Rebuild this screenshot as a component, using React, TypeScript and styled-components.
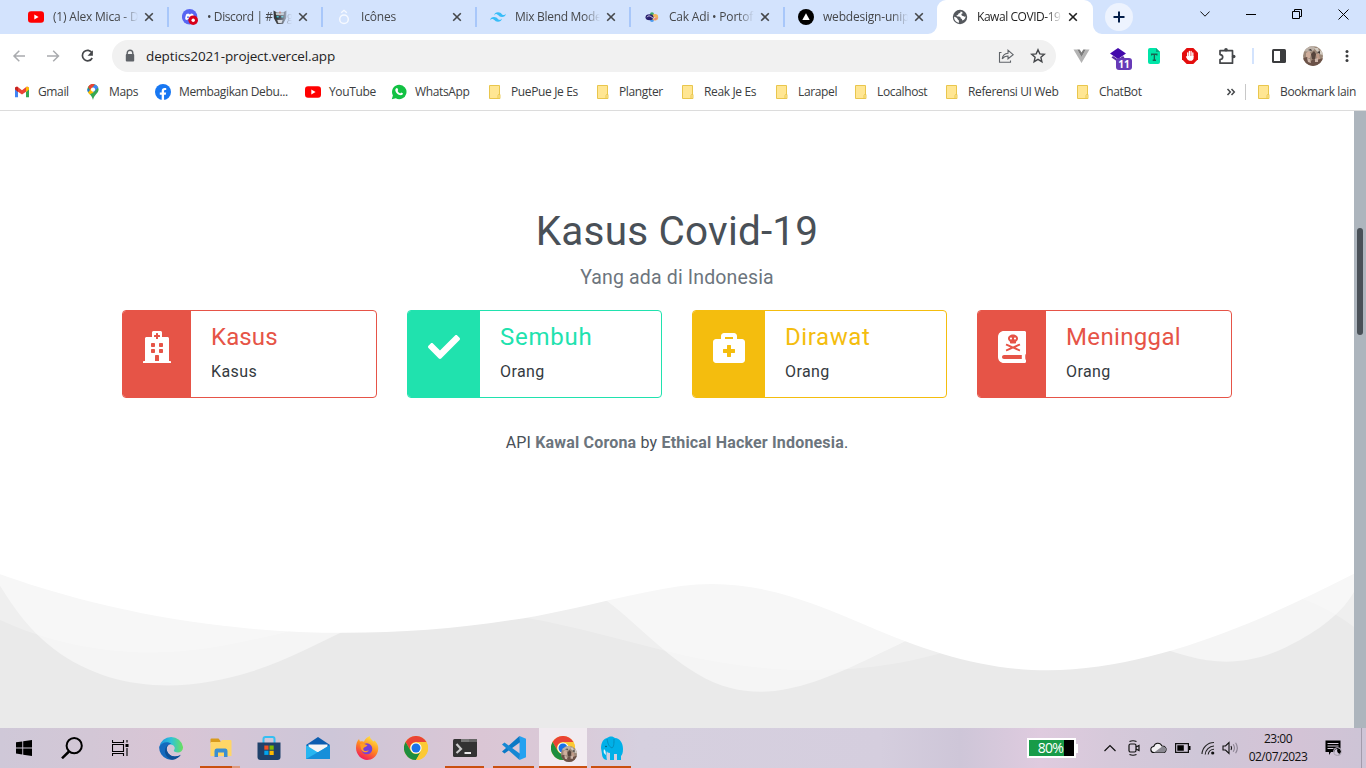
import React from 'react';
import styled, { createGlobalStyle } from 'styled-components';
import { FaHospital, FaCheck, FaBriefcaseMedical, FaBookDead, FaWhatsapp, FaFacebookF } from 'react-icons/fa';

const UI_FONT = '"Open Sans", "Noto Sans", sans-serif';
const PAGE_FONT = 'Roboto, "Liberation Sans", sans-serif';

const GlobalStyle = createGlobalStyle`
  * { box-sizing: border-box; }
  body { margin: 0; overflow: hidden; background: #fff; }
  svg { display: block; flex: none; }
`;

const Screen = styled.div`
  width: 1366px;
  height: 768px;
  display: flex;
  flex-direction: column;
  overflow: hidden;
  font-family: ${UI_FONT};
`;

/* ---------- tab strip ---------- */

const TabStrip = styled.div`
  height: 34px;
  flex: none;
  display: flex;
  background: #d3e3fd;
  padding-left: 15px;
`;

const Tab = styled.div<{ $active?: boolean; $noLine?: boolean }>`
  position: relative;
  width: 154px;
  height: 34px;
  display: flex;
  align-items: center;
  padding-left: 13px;
  border-radius: 9px 9px 0 0;
  background: ${p => (p.$active ? '#fff' : 'transparent')};
  ${p => p.$active && 'margin-left: -2px; padding-left: 15px; width: 156px;'}
  &::after {
    content: '';
    position: absolute;
    right: 0;
    top: 7px;
    width: 2px;
    height: 20px;
    background: ${p => (p.$active || p.$noLine ? 'transparent' : '#a8c7fa')};
  }
`;

const TabFoot = styled.svg<{ $side: 'left' | 'right' }>`
  position: absolute;
  bottom: 0;
  ${p => p.$side}: -9px;
`;

const TabTitle = styled.div<{ $active?: boolean; $ls?: number }>`
  width: 86px;
  margin-left: 9px;
  display: flex;
  align-items: center;
  white-space: nowrap;
  overflow: hidden;
  font-size: 12px;
  line-height: 18px;
  letter-spacing: ${p => p.$ls ?? -0.2}px;
  color: ${p => (p.$active ? '#1f1f1f' : '#45474a')};
  mask-image: linear-gradient(90deg, #000 80%, transparent 99%);
`;

const TabClose = styled.div`
  margin-left: 4px;
`;

const NewTab = styled.div`
  width: 28px;
  height: 28px;
  margin: 3px 0 0 12px;
  border-radius: 50%;
  background: #edf3fe;
  display: flex;
  align-items: center;
  justify-content: center;
`;

const WindowButtons = styled.div`
  margin-left: auto;
  display: flex;
  height: 28px;
  & > * {
    width: 46px;
    display: flex;
    align-items: center;
    justify-content: center;
  }
`;

/* ---------- toolbar ---------- */

const Toolbar = styled.div`
  height: 42px;
  flex: none;
  display: flex;
  align-items: center;
  padding: 2px 0 0 12px;
`;

const NavButton = styled.div`
  width: 34px;
  height: 16px;
`;

const AddressBar = styled.div`
  width: 944px;
  height: 32px;
  margin-left: -2px;
  border-radius: 16px;
  background: #f1f1f1;
  display: flex;
  align-items: center;
  padding: 0 10px 0 12px;
`;

const Url = styled.div`
  flex: 1;
  margin-left: 10px;
  font-size: 13.5px;
  line-height: 20px;
  letter-spacing: -0.13px;
  color: #1f1f1f;
`;

const AddressIcon = styled.div`
  margin-left: 16px;
`;

const ExtensionRow = styled.div`
  display: flex;
  align-items: center;
  flex: 1;
  padding-left: 17px;
`;

const ExtensionSlot = styled.div<{ $w: number }>`
  position: relative;
  flex: none;
  width: ${p => p.$w}px;
  height: 20px;
  display: flex;
  align-items: center;
`;

const Badge = styled.div`
  position: absolute;
  left: 6px;
  top: 12px;
  width: 16px;
  height: 12px;
  border-radius: 3px;
  background: #673ab7;
  color: #fff;
  font: 700 10px/12px ${UI_FONT};
  text-align: center;
`;

const ToolbarLine = styled.div`
  width: 2px;
  height: 16px;
  background: #d3e3fd;
  margin-right: 18px;
`;

/* ---------- bookmarks ---------- */

const BookmarkBar = styled.div`
  height: 35px;
  flex: none;
  display: flex;
  align-items: center;
  padding: 0 0 2px 14px;
  border-bottom: 1px solid #dcdcdc;
`;

const Bookmark = styled.div<{ $w: number }>`
  flex: none;
  width: ${p => p.$w}px;
  display: flex;
  align-items: center;
  gap: 8px;
`;

const BookmarkText = styled.span<{ $ls?: number }>`
  font-size: 12px;
  line-height: 16px;
  white-space: nowrap;
  letter-spacing: ${p => p.$ls ?? -0.36}px;
  color: #3b3d40;
`;

const MoreBookmarks = styled.div`
  width: 19px;
  margin-left: 5px;
`;

const BookmarkLine = styled.div`
  width: 1px;
  height: 16px;
  background: #c8c8c8;
  margin-right: 10px;
`;

/* ---------- web page ---------- */

const Viewport = styled.div`
  height: 617px;
  flex: none;
  display: flex;
`;

const Page = styled.main`
  width: 1354px;
  height: 617px;
  background: #fff;
  overflow: hidden;
  font-family: ${PAGE_FONT};
`;

const Scrollbar = styled.div`
  width: 12px;
  background: #adb5bd;
  padding: 117px 3px 0;
`;

const ScrollThumb = styled.div`
  width: 6px;
  height: 107px;
  border-radius: 3px;
  background: #495057;
`;

const CasesSection = styled.section`
  height: 457px;
  padding-top: 96px;
  display: flex;
  flex-direction: column;
  align-items: center;
`;

const Title = styled.h1`
  margin: 0;
  font-size: 40.5px;
  font-weight: 400;
  line-height: 48px;
  letter-spacing: 0.2px;
  color: #495057;
`;

const Subtitle = styled.p`
  margin: 9px 0 0;
  font-size: 19.5px;
  line-height: 28px;
  letter-spacing: 0.15px;
  color: #6c757d;
`;

const Cards = styled.div`
  width: 1110px;
  margin-top: 18px;
  display: grid;
  grid-template-columns: repeat(4, 255px);
  gap: 30px;
`;

const Card = styled.article<{ $color: string }>`
  height: 88px;
  display: flex;
  border: 1px solid ${p => p.$color};
  border-radius: 4px;
  overflow: hidden;
`;

const CardIcon = styled.div<{ $color: string }>`
  flex: none;
  padding: 20px 20px 0;
  background: ${p => p.$color};
  color: #fff;
`;

const CardBody = styled.div`
  padding: 12px 0 0 20px;
`;

const CardTitle = styled.h2<{ $color: string; $ls: number }>`
  margin: 0;
  font-size: 24px;
  font-weight: 400;
  line-height: 29px;
  letter-spacing: ${p => p.$ls}px;
  color: ${p => p.$color};
`;

const CardUnit = styled.p`
  margin: 8px 0 0;
  font-size: 16px;
  line-height: 24px;
  letter-spacing: 0.4px;
  color: #343a40;
`;

const Credit = styled.p`
  margin: 33px 0 0;
  font-size: 16px;
  line-height: 24px;
  letter-spacing: 0.18px;
  color: #495057;
  strong { color: #6c757d; font-weight: 700; }
`;

const WaveSection = styled.section`
  height: 160px;
  background: #eaeaea;
`;

/* ---------- taskbar ---------- */

const Taskbar = styled.footer`
  height: 40px;
  flex: none;
  display: flex;
  background: linear-gradient(90deg, #cfc8d8 0, #d3c7d6 90px, #d9c5d5 170px, #d4c6d7 230px, #cdc6d8 330px, #dac6d5 480px, #dac9d7 560px, #d6d0df 640px, #d5cede 880px, #cec6d8 960px, #dfcbdf 1040px, #d6c9da 1110px, #cfc7d8 1200px, #d4c3d6 1290px, #cdc4d6 1366px);
`;

const TaskButton = styled.div<{ $w: number; $on?: boolean }>`
  width: ${p => p.$w}px;
  height: 40px;
  display: flex;
  align-items: center;
  justify-content: center;
  background: ${p => (p.$on ? '#f1ebf0' : 'transparent')};
`;

const RunningApp = styled(TaskButton)<{ $wide?: boolean; $stack?: boolean }>`
  position: relative;
  &::after {
    content: '';
    position: absolute;
    bottom: 0;
    left: ${p => (p.$wide ? 0 : 4)}px;
    right: ${p => (p.$wide ? 0 : 5)}px;
    height: 2px;
    background: ${p => (p.$stack ? 'linear-gradient(90deg, #ca5010 80%, #df9a7e 80%)' : '#ca5010')};
  }
`;

const Tray = styled.div`
  margin-left: auto;
  display: flex;
  align-items: center;
`;

const Battery = styled.div`
  width: 49px;
  height: 20px;
  border: 2px solid #fff;
  display: flex;
  align-items: center;
  justify-content: center;
  background: linear-gradient(90deg, #179b48 35px, #000 35px);
  padding-right: 2px;
  color: #fff;
  font: 400 14px/16px ${UI_FONT};
  letter-spacing: -0.7px;
`;

const BatteryTip = styled.div`
  width: 2px;
  height: 9px;
  background: #fff;
  margin-right: 25px;
`;

const TrayIcon = styled.div<{ $w: number }>`
  width: ${p => p.$w}px;
  display: flex;
  justify-content: center;
`;

const Clock = styled.div`
  width: 74px;
  margin-left: -5px;
  text-align: center;
  color: #111;
  font-size: 12px;
  line-height: 18px;
  letter-spacing: -0.5px;
  white-space: nowrap;
`;

const Notice = styled.div`
  width: 36px;
  display: flex;
  justify-content: center;
`;

const ShowDesktop = styled.div`
  width: 5px;
  height: 40px;
  margin-left: 10px;
  border-left: 1px solid #a39bab;
`;

/* ---------- drawings ---------- */

const YouTube = () => (
  <svg width="16" height="16" viewBox="0 0 16 16">
    <rect y="2.3" width="16" height="11.4" rx="3" fill="#f00" />
    <path d="M6.3 5.6v4.8L10.6 8z" fill="#fff" />
  </svg>
);

const Discord = () => (
  <svg width="16" height="16" viewBox="0 0 16 16">
    <circle cx="7.6" cy="7.8" r="7.7" fill="#5865f2" />
    <path d="M3.2 10.3c0-2.300.5-4 1.300-5.200l2-.6.5.8h1.500l.5-.8 2 .6c.8 1.200 1.200 2.900 1.200 4.900l-2 1.200-.7-1.100H6l-.8 1.100z" fill="#fff" />
    <circle cx="6" cy="8.200" r=".9" fill="#5865f2" />
    <circle cx="11.200" cy="11.200" r="4.800" fill="#d8001b" />
    <circle cx="11.200" cy="11.200" r="1.700" fill="#fff" />
  </svg>
);

const BotFace = () => (
  <svg width="14" height="15" viewBox="0 0 14 15">
    <path d="M.5.500l3.500 2h6l3.500-2-.3 7.500-3.200 6H4L.8 8z" fill="#37383a" />
    <path d="M2.600 2.600L11 2.600l-.4 3H3.200z" fill="#bfc1c2" />
    <path d="M2.600 5.500h8.800l-.8 3H3.400z" fill="#1b1b1c" />
    <path d="M3.500 6h2.200v1.400H3.500zM8.200 6h2.200v1.400H8.200z" fill="#3ec3cf" />
    <path d="M4.300 10h5.400L8.600 13H5.300z" fill="#d9d9d9" />
    <path d="M6.400 1.500h1.200v2H6.400z" fill="#d04a3a" />
  </svg>
);

const Icones = () => (
  <svg width="16" height="16" viewBox="0 0 16 16" fill="none" stroke="#f6f9ff">
    <circle cx="8" cy="10.300" r="4.300" strokeWidth="1.500" />
    <path d="M5.200 3.800L8 1.300l2.800 2.500" strokeWidth="1.300" />
  </svg>
);

const Tailwind = () => (
  <svg width="16" height="16" viewBox="0 0 24 24" fill="#38bdf8">
    <path d="M12 4.800c-3.200 0-5.200 1.600-6 4.800 1.200-1.600 2.600-2.200 4.200-1.800.913.228 1.565.89 2.288 1.624C13.666 10.618 15.027 12 18 12c3.200 0 5.200-1.600 6-4.800-1.200 1.600-2.600 2.200-4.200 1.800-.913-.228-1.565-.89-2.288-1.624C16.337 6.182 14.976 4.800 12 4.800zM6 12c-3.200 0-5.200 1.600-6 4.800 1.200-1.600 2.600-2.200 4.200-1.800.913.228 1.565.89 2.288 1.624C7.666 17.818 9.027 19.200 12 19.200c3.200 0 5.200-1.600 6-4.800-1.200 1.600-2.600 2.200-4.200 1.800-.913-.228-1.565-.89-2.288-1.624C10.337 13.382 8.976 12 6 12z" />
  </svg>
);

const Knot = () => (
  <svg width="16" height="16" viewBox="0 0 16 16">
    <circle cx="8" cy="5.300" r="2" fill="#3faa67" />
    <circle cx="8" cy="11" r="2" fill="#4c9bf0" />
    <circle cx="11" cy="8.200" r="3.200" fill="#f3b65c" />
    <path d="M14 8.500l-3 3-1-2z" fill="#e87f8f" />
    <ellipse cx="5.500" cy="8.200" rx="4" ry="3" fill="#29206f" />
    <path d="M3 8.200c1.500-2.200 3.500-1.200 5 .2s2.500 1 3-.5" fill="none" stroke="#e9dff5" strokeWidth=".9" />
  </svg>
);

const Vercel = () => (
  <svg width="16" height="16" viewBox="0 0 16 16">
    <circle cx="8" cy="8" r="8" fill="#000" />
    <path d="M8 4.300L11.700 11H4.300z" fill="#fff" />
  </svg>
);

const Globe = () => (
  <svg width="16" height="16" viewBox="0 0 16 16">
    <circle cx="8" cy="8" r="7.200" fill="#54585d" />
    <path d="M8.800 2.200c-.2 1.500-.8 2-2.200 2.200-.6 1.700-1.200 1.800-2.200 1.900.2 1 .9 1.200 2.400 1.200 1.500 0 1.900.8 1.900 2 1.200.1 1.600.8 1.500 2 2-.4 3.400-2.200 3.500-4.200-.7.600-1.800.4-2.400-.4-.8.2-1.900-.1-1.900-1.300 0-.9.7-1.300 1.900-1.300z" fill="#fff" />
    <path d="M2.100 7.800c1.300.2 3 .8 3.300 2 .2 1 1 1.200 1.400 1.500l.2 2.500C4 13.400 2 11 2.100 7.800z" fill="#fff" />
  </svg>
);

const Cross = ({ dark }: { dark?: boolean }) => (
  <svg width="12" height="12" viewBox="0 0 12 12">
    <path d="M2.200 2.200l7.600 7.600M9.800 2.200L2.200 9.800" stroke={dark ? '#1f1f1f' : '#45474a'} strokeWidth="1.600" />
  </svg>
);

const Gmail = () => (
  <svg width="16" height="16" viewBox="0 0 16 16">
    <path d="M1 4.500v8.700h3V7.500L1 5z" fill="#4285f4" />
    <path d="M12 7.500v5.700h3V4.500z" fill="#34a853" />
    <path d="M1 4.500c0-1.600 1.700-2.300 2.900-1.400L8 6.200l4.100-3.100c1.200-.9 2.900-.2 2.900 1.400L12 7.700 8 10.500 4 7.700z" fill="#ea4335" />
    <path d="M12 3.200c1.400-1 3 0 3 1.400v1L12 7.900z" fill="#fbbc04" />
    <path d="M4 3.200C2.600 2.200 1 3.200 1 4.600v1l3 2.300z" fill="#c5221f" />
  </svg>
);

const MapsPin = () => (
  <svg width="16" height="16" viewBox="0 0 16 16">
    <path d="M8 0a5.600 5.600 0 0 0-5.600 5.600C2.400 9.500 6.800 10.500 8 16c1.200-5.500 5.600-6.500 5.600-10.400A5.600 5.600 0 0 0 8 0z" fill="#34a853" />
    <path d="M3.200 2.700A5.600 5.600 0 0 1 10 .4L5 6.300z" fill="#ea4335" />
    <path d="M10 .4a5.600 5.600 0 0 1 3.200 3L8.500 8.500 6 5.500z" fill="#4285f4" />
    <path d="M2.600 4.500l2.600 1.800-2.200 2C2.300 6.800 2.300 5.600 2.600 4.500z" fill="#1a73e8" />
    <path d="M8.500 8.500L4.500 10.600 3 8.400l4-5z" fill="#fbbc04" />
    <circle cx="8" cy="5.600" r="2.100" fill="#fff" />
  </svg>
);

const WhatsApp = () => (
  <svg width="16" height="16" viewBox="0 0 16 16">
    <path d="M8.200.800a7.200 7.200 0 1 1-3.400 13.500L.8 15.300l1.100-3.800A7.200 7.200 0 0 1 8.200.800z" fill="#12c143" />
    <path d="M5.400 4.300c.7-.5 1.100-.1 1.300.5l.5 1.200-.6 1c.6 1.100 1.400 1.800 2.600 2.400l.9-1 1.800.9c.2 1.300-1 2-2 2-2.800-.2-5.600-3-5.600-5.300 0-.8.5-1.400 1.100-1.700z" fill="#fff" />
  </svg>
);

const RoundLogo = styled.div<{ $bg: string; $pad?: number }>`
  width: 16px;
  height: 16px;
  border-radius: 50%;
  background: ${p => p.$bg};
  color: #fff;
  display: flex;
  align-items: ${p => (p.$pad ? 'flex-end' : 'center')};
  justify-content: center;
  flex: none;
`;

const Folder = () => (
  <svg width="16" height="16" viewBox="0 0 16 16">
    <path d="M2.500 1.500h10V14.500h-10z" fill="#ffe693" stroke="#e9c64d" />
    <path d="M11.500 10.500h1.500v4h-2v-3z" fill="#ffe693" stroke="#e9c64d" strokeWidth=".9" />
  </svg>
);

const Avatar = ({ size }: { size: number }) => (
  <svg width={size} height={size} viewBox="0 0 20 20">
    <defs><clipPath id={`face${size}`}><circle cx="10" cy="10" r="10" /></clipPath></defs>
    <g clipPath={`url(#face${size})`}>
      <path d="M0 0h20v20H0z" fill="#9c8878" />
      <path d="M0 0h12l-1 4-4 2-7-1z" fill="#bdb2a8" />
      <path d="M11 2h4l1 3 4-1v5l-4-1z" fill="#d2cac0" />
      <path d="M3 7l3-2 2 3-1 4H3z" fill="#cfae9c" />
      <path d="M8 8l3-3 2 3-1 5H9z" fill="#55443c" />
      <path d="M13 8h3l1 5-3 1z" fill="#c09b88" />
      <path d="M0 12l4-1 3 5 3-3 4 1 6-2v8H0z" fill="#6b5248" />
      <path d="M4 12l3 1 1 4-3-1zM12 13l3-1v4h-3z" fill="#cdb5a9" />
      <path d="M14 6l3-1v3zM5 4l3-1 1 2z" fill="#3b3330" />
    </g>
  </svg>
);

const Chrome = ({ size = 24 }: { size?: number }) => (
  <svg width={size} height={size} viewBox="0 0 24 24">
    <circle cx="12" cy="12" r="12" fill="#fcc934" />
    <path d="M1.600 6A12 12 0 0 1 22.400 6H12a6 6 0 0 0-5.200 9z" fill="#ea4335" />
    <path d="M1.600 6L6.800 15A6 6 0 0 0 17.200 15L12 24A12 12 0 0 1 1.600 6z" fill="#1e8e3e" />
    <path d="M22.400 6H12l5.200 9L12 24A12 12 0 0 0 22.400 6z" fill="#fcc934" />
    <circle cx="12" cy="12" r="5.600" fill="#fff" />
    <circle cx="12" cy="12" r="4.500" fill="#1a73e8" />
  </svg>
);

const ProfileChrome = styled.div`
  position: relative;
  width: 24px;
  height: 24px;
  & > svg:last-child {
    position: absolute;
    left: 10px;
    top: 10px;
  }
`;

const Waves = () => (
  <svg width="1354" height="135" viewBox="0 0 1200 120" preserveAspectRatio="none" fill="#fff">
    <path d="M0,0V46.29c47.79,22.2,103.59,32.17,158,28,70.36-5.37,136.33-33.31,206.8-37.5C438.64,32.43,512.34,53.67,583,72.05c69.27,18,138.3,24.88,209.4,13.08,36.15-6,69.85-17.84,104.45-29.34C989.49,25,1113-14.29,1200,52.47V0Z" opacity=".25" />
    <path d="M0,0V15.81C13,36.92,27.64,56.86,47.69,72.05,99.41,111.27,165,111,224.58,91.58c31.15-10.15,60.09-26.07,89.67-39.8,40.92-19,84.73-46,130.83-49.67,36.26-2.85,70.9,9.42,98.6,31.56,31.77,25.39,62.32,62,103.63,73,40.44,10.79,81.35-6.69,119.13-24.28s75.16-39,116.92-43.05c59.73-5.85,113.28,22.88,168.9,38.84,30.2,8.66,59,6.17,87.09-7.5,22.43-10.89,48-26.93,60.65-49.24V0Z" opacity=".5" />
    <path d="M0,0V5.63C149.93,59,314.09,71.32,475.83,42.57c43-7.64,84.23-20.12,127.61-26.46,59-8.63,112.48,12.24,165.56,35.4C827.93,77.22,886,95.24,951.2,90c86.53-7,172.46-45.71,248.8-84.81V0Z" />
  </svg>
);

/* ---------- data ---------- */

const tabs = [
  { icon: <YouTube />, title: '(1) Alex Mica - D' },
  { icon: <Discord />, title: <>• Discord | #<BotFace />g</>, ls: -0.4 },
  { icon: <Icones />, title: 'Icônes' },
  { icon: <Tailwind />, title: 'Mix Blend Mode', ls: -0.3 },
  { icon: <Knot />, title: 'Cak Adi • Portof' },
  { icon: <Vercel />, title: 'webdesign-unip' },
  { icon: <Globe />, title: 'Kawal COVID-19', active: true, ls: -0.45 },
];

const bookmarks = [
  { icon: <Gmail />, label: 'Gmail', w: 71 },
  { icon: <MapsPin />, label: 'Maps', w: 70 },
  { icon: <RoundLogo $bg="#1877f2" $pad={1}><FaFacebookF size={12} /></RoundLogo>, label: 'Membagikan Debu...', w: 150 },
  { icon: <YouTube />, label: 'YouTube', w: 86 },
  { icon: <WhatsApp />, label: 'WhatsApp', w: 96 },
  { icon: <Folder />, label: 'PuePue Je Es', w: 108 },
  { icon: <Folder />, label: 'Plangter', w: 85 },
  { icon: <Folder />, label: 'Reak Je Es', w: 94 },
  { icon: <Folder />, label: 'Larapel', w: 79 },
  { icon: <Folder />, label: 'Localhost', w: 91 },
  { icon: <Folder />, label: 'Referensi UI Web', w: 131 },
  { icon: <Folder />, label: 'ChatBot', w: 146 },
];

const cards = [
  { color: '#e65447', icon: <FaHospital size={32} style={{ width: 28 }} />, title: 'Kasus', unit: 'Kasus', ls: 0.1 },
  { color: '#20e2ae', icon: <FaCheck size={32} />, title: 'Sembuh', unit: 'Orang', ls: 0.75 },
  { color: '#f4bd0e', icon: <FaBriefcaseMedical size={32} />, title: 'Dirawat', unit: 'Orang', ls: 0.6 },
  { color: '#e65447', icon: <FaBookDead size={32} style={{ width: 28 }} />, title: 'Meninggal', unit: 'Orang', ls: 0.35 },
];

export default function App() {
  return (
    <Screen>
      <GlobalStyle />
      <TabStrip>
        {tabs.map((t, i) => (
          <Tab key={i} $active={t.active} $noLine={i === 5}>
            {t.active && (
              <>
                <TabFoot $side="left" width="9" height="9"><path d="M9 0v9H0a9 9 0 0 0 9-9z" fill="#fff" /></TabFoot>
                <TabFoot $side="right" width="9" height="9"><path d="M0 0v9h9a9 9 0 0 1-9-9z" fill="#fff" /></TabFoot>
              </>
            )}
            {t.icon}
            <TabTitle $active={t.active} $ls={t.ls}>{t.title}</TabTitle>
            <TabClose><Cross dark={t.active} /></TabClose>
          </Tab>
        ))}
        <NewTab>
          <svg width="12" height="12"><path d="M6 .500v11M.5 6h11" stroke="#041e49" strokeWidth="2" /></svg>
        </NewTab>
        <WindowButtons>
          <div><svg width="10" height="6" fill="none" stroke="#111"><path d="M.4.500L5 5.200 9.600.500" /></svg></div>
          <div><svg width="10" height="1"><path d="M0 .500h10" stroke="#000" /></svg></div>
          <div>
            <svg width="10" height="10" fill="none" stroke="#000">
              <path d="M.5 2.500h7v7h-7zM2.500 2.500v-2h7v7h-2" />
            </svg>
          </div>
          <div><svg width="11" height="11"><path d="M.5.500l10 10M10.500.500l-10 10" stroke="#000" /></svg></div>
        </WindowButtons>
      </TabStrip>

      <Toolbar>
        <NavButton>
          <svg width="16" height="16" fill="none" stroke="#a9abae" strokeWidth="1.500"><path d="M13 8H2M7.300 2.700L2 8l5.300 5.300" /></svg>
        </NavButton>
        <NavButton>
          <svg width="16" height="16" fill="none" stroke="#a9abae" strokeWidth="1.500"><path d="M1 8h11.500M7.200 2.700L12.500 8l-5.300 5.300" /></svg>
        </NavButton>
        <NavButton>
          <svg width="16" height="16" fill="none" stroke="#45474a" strokeWidth="1.700">
            <path d="M12 4.800A5.200 5.200 0 1 0 12.200 10" />
            <path d="M12.900 2.300v5.400H7.500z" fill="#45474a" stroke="none" />
          </svg>
        </NavButton>
        <AddressBar>
          <svg width="12" height="14" viewBox="0 0 12 14">
            <path d="M3.200 6V4a2.800 2.800 0 0 1 5.600 0v2" fill="none" stroke="#5f6368" strokeWidth="1.400" />
            <rect x="1.800" y="5" width="8.400" height="7.500" rx="1" fill="#5f6368" />
          </svg>
          <Url>deptics2021-project.vercel.app</Url>
          <svg width="16" height="16" fill="none" stroke="#5f6368" strokeWidth="1.100">
            <path d="M3.500 4.500H1.500v9.800H12.500V12.500" />
            <path d="M4.200 10.800C4.700 7.300 6.600 5.500 10 5.200V2.300L15.200 6.700 10 10.800V8c-2.500 0-4.400.9-5.800 2.800z" />
          </svg>
          <AddressIcon>
            <svg width="16" height="16" fill="none" stroke="#45474a" strokeWidth="1.400">
              <path d="M8 1.800l1.800 4.100 4.500.4-3.400 3 1 4.400L8 11.400l-3.900 2.300 1-4.400-3.400-3 4.500-.4z" />
            </svg>
          </AddressIcon>
        </AddressBar>
        <ExtensionRow>
          <ExtensionSlot $w={37}>
            <svg width="17" height="16" viewBox="0 0 17 16">
              <path d="M.5 1.500h3.700L8.500 9l4.300-7.500h3.700L8.500 15z" fill="#b3b3b3" />
              <path d="M4.200 1.500h2.500l1.800 3 1.800-3h2.500L8.500 9z" fill="#7d7d7d" />
            </svg>
          </ExtensionSlot>
          <ExtensionSlot $w={37}>
            <svg width="17" height="18" viewBox="0 0 17 18">
              <path d="M0 6.500L8 1l8 5.500L8 12z" fill="#4309ac" />
              <path d="M1.500 10.500L3 9l5 3.500L13 9l1.500 1.500L8 15z" fill="#5a2ca0" />
            </svg>
            <Badge>11</Badge>
          </ExtensionSlot>
          <ExtensionSlot $w={35}>
            <svg width="14" height="16" viewBox="0 0 14 16">
              <path d="M3 0h6l4 4v10a2 2 0 0 1-2 2H3a2 2 0 0 1-2-2V2a2 2 0 0 1 2-2z" fill="#00e5a8" />
              <path d="M9 0l4 4H9z" fill="#0aa781" />
              <path d="M4 5.500h6.500v2H9.300V7H8v4.500h1V13H5.700v-1.500h1V7H5.200v.5H4z" fill="#176451" />
            </svg>
          </ExtensionSlot>
          <ExtensionSlot $w={36}>
            <svg width="16" height="16" viewBox="0 0 16 16">
              <path d="M4.700 0h6.600L16 4.700v6.600L11.300 16H4.700L0 11.300V4.700z" fill="#e40d0d" />
              <path d="M5.700 9V4.800M7.400 8V3.500M9.100 8V3.500M10.800 9V4.800" stroke="#fff" strokeWidth="1.300" strokeLinecap="round" />
              <path d="M5 8h6.500v2.200c0 1.500-1.200 2.600-3 2.600-1.600 0-2.700-.8-3.500-2.100l-1.200-2z" fill="#fff" />
            </svg>
          </ExtensionSlot>
          <ExtensionSlot $w={34}>
            <svg width="18" height="18" viewBox="0 0 18 18">
              <path d="M2 3.700h12.500v12.500H2v-3.700c3.600-.2 3.600-4.700 0-4.900z" fill="none" stroke="#45474a" strokeWidth="1.700" strokeLinejoin="round" />
              <circle cx="8" cy="2.700" r="1.800" fill="#45474a" />
              <circle cx="15.700" cy="9.500" r="1.800" fill="#45474a" />
            </svg>
          </ExtensionSlot>
          <ToolbarLine />
          <ExtensionSlot $w={31}>
            <svg width="14" height="14"><rect width="14" height="14" rx="1.500" fill="#3b3c3e" /><rect x="2" y="2" width="6" height="10" fill="#fff" /></svg>
          </ExtensionSlot>
          <ExtensionSlot $w={42}><Avatar size={20} /></ExtensionSlot>
          <svg width="4" height="14" fill="#3b3c3e"><circle cx="2" cy="2.500" r="1.500" /><circle cx="2" cy="7" r="1.500" /><circle cx="2" cy="11.500" r="1.500" /></svg>
        </ExtensionRow>
      </Toolbar>

      <BookmarkBar>
        {bookmarks.map(b => (
          <Bookmark key={b.label} $w={b.w}>{b.icon}<BookmarkText>{b.label}</BookmarkText></Bookmark>
        ))}
        <MoreBookmarks>
          <svg width="10" height="8" fill="none" stroke="#45474a" strokeWidth="1.500"><path d="M1.500 1L4.300 4 1.500 7M5.500 1l2.800 3-2.800 3" /></svg>
        </MoreBookmarks>
        <BookmarkLine />
        <Bookmark $w={110}><Folder /><BookmarkText>Bookmark lain</BookmarkText></Bookmark>
      </BookmarkBar>

      <Viewport>
        <Page>
          <CasesSection>
            <Title>Kasus Covid-19</Title>
            <Subtitle>Yang ada di Indonesia</Subtitle>
            <Cards>
              {cards.map(c => (
                <Card key={c.title} $color={c.color}>
                  <CardIcon $color={c.color}>{c.icon}</CardIcon>
                  <CardBody>
                    <CardTitle $color={c.color} $ls={c.ls}>{c.title}</CardTitle>
                    <CardUnit>{c.unit}</CardUnit>
                  </CardBody>
                </Card>
              ))}
            </Cards>
            <Credit>API <strong>Kawal Corona</strong> by <strong>Ethical Hacker Indonesia</strong>.</Credit>
          </CasesSection>
          <WaveSection><Waves /></WaveSection>
        </Page>
        <Scrollbar><ScrollThumb /></Scrollbar>
      </Viewport>

      <Taskbar>
        <TaskButton $w={48}>
          <svg width="16" height="16" viewBox="0 0 16 16"><path d="M0 2.300l6.300-.9v6H0zM7.200 1.300L16 0v7.400H7.200zM0 8.400h6.300v6L0 13.500zM7.200 8.400H16V16l-8.800-1.300z" /></svg>
        </TaskButton>
        <TaskButton $w={48}>
          <svg width="22" height="22" fill="none" stroke="#000"><circle cx="13.200" cy="8.700" r="7.600" strokeWidth="2" /><path d="M8 14.500L1 21.300" strokeWidth="2.500" /></svg>
        </TaskButton>
        <TaskButton $w={49}>
          <svg width="17" height="16" fill="none" stroke="#000">
            <path d="M.5 4.500h11v7H.500zM.5 0v2.500h11V0M.5 16v-2.500h11V16M15 0v2.500M15 8v8" strokeWidth="1.100" />
            <path d="M13.500 4h3v3h-3z" fill="#000" stroke="none" />
          </svg>
        </TaskButton>
        <TaskButton $w={51}>
          <svg width="24" height="24" viewBox="0 0 24 24">
            <defs>
              <linearGradient id="edgeTop" x1="0" x2="1"><stop offset="0" stopColor="#1b8fdc" /><stop offset=".5" stopColor="#2ec3d8" /><stop offset="1" stopColor="#6be05c" /></linearGradient>
            </defs>
            <path d="M.3 11A12 12 0 0 1 24 11c.2 3.300-2.200 5.500-5 5.500-3 0-4.600-1.200-4.300-2.200 1.300-1.300 1.500-5.300-3-5.800C7 8 2.300 9 .3 11z" fill="url(#edgeTop)" />
            <path d="M.2 11C2.500 6 9 5 12.500 8c-3 0-4.800 2.200-4.800 5 0 4 4 7.500 8.300 7.500 2.200 0 4.200-.7 5.800-1.700A12 12 0 0 1 .2 11z" fill="#1469bd" />
            <path d="M7.700 13c0 4 4 7.500 8.300 7.500 2.200 0 4.200-.7 5.800-1.700a12 12 0 0 1-8 5C9 23.500 5.500 18.500 6 14.500c.2-3 2-5.500 5-6.400-2 .7-3.300 2.700-3.300 4.900z" fill="#0d4f96" />
            <path d="M14.800 14.300c1.300-1.400 1-4.300-1.300-4.800-2 .3-3 1.700-3 3.400 0 3.500 3 5.800 6.500 5.800 2-.1 4-.4 5.600-1.400-2.700.5-8.800.3-7.800-3z" fill="#cfc7d8" opacity=".9" />
          </svg>
        </TaskButton>
        <RunningApp $w={49} $stack>
          <svg width="22" height="20" viewBox="0 0 22 20">
            <path d="M.500 1.500q0-1 1-1h7l2 2.500v2h-10z" fill="#d99b1c" />
            <path d="M.500 4h10l1.500-2h8.500q1 0 1 1v15h-21z" fill="#ffd667" />
            <path d="M4.500 19v-6q0-2.500 2-2.500h9q2 0 2 2.500v6h-3.500v-4.500h-6V19z" fill="#3a8ed1" />
          </svg>
        </RunningApp>
        <TaskButton $w={47}>
          <svg width="24" height="24" viewBox="0 0 24 24">
            <path d="M6.500 7V3q0-2 2-2h7q2 0 2 2v4" fill="none" stroke="#35bff2" strokeWidth="2" />
            <path d="M.500 6.500h23V21q0 3-3 3h-17q-3 0-3-3z" fill="#1f416b" />
            <path d="M7.300 9.500h4.200v4.200H7.300z" fill="#f25022" /><path d="M12.500 9.500h4.200v4.200h-4.200z" fill="#7fba00" />
            <path d="M7.300 14.700h4.200v4.200H7.300z" fill="#00a4ef" /><path d="M12.500 14.700h4.200v4.200h-4.200z" fill="#ffb900" />
          </svg>
        </TaskButton>
        <TaskButton $w={51}>
          <svg width="24" height="22" viewBox="0 0 24 22">
            <path d="M0 8l12-8 12 8v14H0z" fill="#0b5daf" />
            <path d="M2.500 7.500h19V15h-19z" fill="#f5f5f5" />
            <path d="M0 8l12 7.500L24 8v14H0z" fill="#27b6f1" />
            <path d="M24 8L8 17.500 0 22h24z" fill="#168fd9" />
          </svg>
        </TaskButton>
        <TaskButton $w={48}>
          <svg width="24" height="24" viewBox="0 0 24 24">
            <defs>
              <linearGradient id="fox" x1=".8" y1="0" x2=".3" y2="1"><stop offset="0" stopColor="#fff04a" /><stop offset=".5" stopColor="#ff8a1f" /><stop offset="1" stopColor="#f0145f" /></linearGradient>
            </defs>
            <path d="M1 12C1 8 2 5 4 3l1 2.500c2-.5 3-.5 4 .2 1-2.700 3-4.700 6-5.700-.3 2.700 2 3.600 3.500 5.600l1.200-1.100C24 9 23.500 13 22.800 15.500 21.500 20.500 17 24 12 24S1 19 1 12z" fill="url(#fox)" />
            <circle cx="11.800" cy="12.800" r="5.500" fill="#7540d9" />
            <path d="M5 8c3-1.500 5 .2 7.500 1.200-1 1.800-3.500 1.500-4.300 3.500 0 2.300 3 3 5.500 1.500C13 17 7.500 17.500 6 13z" fill="#ff9d25" />
          </svg>
        </TaskButton>
        <TaskButton $w={50}><Chrome /></TaskButton>
        <RunningApp $w={48}>
          <svg width="24" height="18" viewBox="0 0 24 18">
            <rect width="24" height="18" rx="1.500" fill="#333" />
            <path d="M8 0h14.500q1.500 0 1.500 1.500V3H8z" fill="#777" /><path d="M16 0h8v3h-8z" fill="#666" />
            <path d="M3.500 5l4.500 5-4.500 4" fill="none" stroke="#ccc" strokeWidth="2.200" />
            <path d="M11.500 14h6.500" stroke="#fff" strokeWidth="1.800" />
          </svg>
        </RunningApp>
        <RunningApp $w={50}>
          <svg width="24" height="24" viewBox="0 0 24 24">
            <path d="M17.500 0L24 2.800v18.400L17.500 24z" fill="#24a1f0" />
            <path d="M17.500 0L0 15.500l2.500 2L18 6.300z" fill="#0a79c6" />
            <path d="M17.500 24L0 8.500l2.500-2L18 17.700z" fill="#1588d4" />
          </svg>
        </RunningApp>
        <RunningApp $w={48} $on $wide>
          <ProfileChrome><Chrome /><Avatar size={16} /></ProfileChrome>
        </RunningApp>
        <RunningApp $w={49}>
          <svg width="24" height="24" viewBox="0 0 24 24">
            <path d="M1 12C1 7 3 3 7 2c2-2 6-2.300 8 0 5 .5 8 5 8 11 0 4-1 6-2 7v4h-4v-6h-3v6h-4v-7c-2 0-3-1-3-2-1 3-.5 7 0 9-3 0-5-3-5-6z" fill="#00b0e8" />
            <path d="M7 3c1 4 1 7 5 9 2-1 2-5 2-9" fill="none" stroke="#0489b5" strokeWidth=".9" />
            <path d="M4 13c-1 3 0 5 2 6l-.500-4z" fill="#e8f6fb" />
            <circle cx="6" cy="10.500" r=".8" fill="#0a4e68" />
          </svg>
        </RunningApp>
        <Tray>
          <Battery>80%</Battery>
          <BatteryTip />
          <TrayIcon $w={13}><svg width="12" height="8" fill="none" stroke="#111" strokeWidth="1.200"><path d="M.5 7L6 1.500 11.500 7" /></svg></TrayIcon>
          <TrayIcon $w={35}>
            <svg width="14" height="16" fill="none" stroke="#111" strokeWidth="1.200">
              <rect x="2" y="4" width="7" height="8" rx="1.500" /><path d="M9 7l3-1.500v5L9 9M2.500 1.500q3.500-1.500 7 0M2.500 14.500q3.500 1.500 7 0" />
            </svg>
          </TrayIcon>
          <TrayIcon $w={14}>
            <svg width="17" height="12" viewBox="0 0 17 12">
              <path d="M4 10.500a3 3 0 0 1-.3-6C5 .500 10 0 12 4c3 0 4.500 2 4 4s-2 2.500-3 2.500z" fill="#f3f1f4" stroke="#111" strokeWidth="1.100" />
              <path d="M4 10.500L11.500 5c3-1 5 1 4.500 3s-2 2.500-3 2.500z" fill="#8b8992" />
            </svg>
          </TrayIcon>
          <TrayIcon $w={36}>
            <svg width="16" height="10"><path d="M.6.600h12.800v8.800H.600z" fill="none" stroke="#111" strokeWidth="1.200" /><path d="M2.300 2.300h6.500v5.400H2.300zM14 3h1.500v4H14z" fill="#000" /></svg>
          </TrayIcon>
          <TrayIcon $w={14}>
            <svg width="14" height="14" fill="none" stroke="#222" strokeWidth="1.100">
              <path d="M1 13A12 12 0 0 1 13 1.500M4.200 13.500A9 9 0 0 1 13 5M7.200 13.500A6 6 0 0 1 13 8.200" /><circle cx="11.700" cy="12" r="1.600" fill="#111" stroke="none" />
            </svg>
          </TrayIcon>
          <TrayIcon $w={31}>
            <svg width="17" height="14" fill="none" stroke="#111" strokeWidth="1.100">
              <path d="M1 5h2.500L7 1.500v11L3.500 9H1z" /><path d="M9 5q1.200 2 0 4" /><path d="M11.200 3.300q2.500 3.700 0 7.400M13.600 1.800q3.500 5.200 0 10.400" stroke="#8b8392" />
            </svg>
          </TrayIcon>
          <Clock>23:00<br />02/07/2023</Clock>
          <Notice>
            <svg width="17" height="16" viewBox="0 0 17 16">
              <path d="M.5.500h15V12H6l-2 3v-3H.500z" fill="#000" /><path d="M2.500 3.500h11M2.500 6h11M2.500 8.500h6" stroke="#d8cddc" />
              <circle cx="12.500" cy="11.500" r="3.900" fill="#000" stroke="#d0c6d8" /><path d="M12.500 9a3 3 0 1 0 2.300 4.500A3 3 0 0 1 12.500 9z" fill="#d0c6d8" />
            </svg>
          </Notice>
          <ShowDesktop />
        </Tray>
      </Taskbar>
    </Screen>
  );
}
